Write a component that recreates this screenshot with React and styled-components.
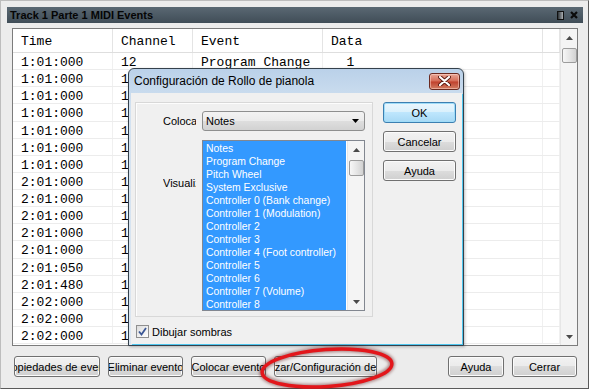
import React from 'react';
import styled, { createGlobalStyle } from 'styled-components';

const Global = createGlobalStyle`
  html, body { margin: 0; padding: 0; background: #ececec; }
  body { width: 589px; height: 389px; overflow: hidden; font-family: "Liberation Sans", Arial, sans-serif; }
  * { box-sizing: border-box; }
`;

const Window = styled.div`
  position: relative;
  width: 589px;
  height: 389px;
  padding: 6px 5px 0 6px;
  background: #ececec;
  border: 1px solid;
  border-color: #bdbdbd #5a5a5a #5a5a5a #bdbdbd;
  display: flex;
  flex-direction: column;
`;

const TitleBar = styled.div`
  height: 16px;
  display: flex;
  align-items: center;
  padding: 0 5px 0 3px;
  background: linear-gradient(#5a6873, #404d57);
  font: bold 11px "Liberation Sans", Arial, sans-serif;
  color: #050505;
`;

const TitleText = styled.span`
  flex: 1;
  white-space: nowrap;
`;

const TitleIcons = styled.div`
  display: flex;
  align-items: center;
  gap: 6px;
`;

const TableFrame = styled.div`
  margin: 5px 5px 0;
  height: 318px;
  border: 1px solid #7c7c7c;
  background: #fff;
  display: flex;
  overflow: hidden;
`;

const Grid = styled.div`
  flex: 1;
  overflow: hidden;
  font-family: "Liberation Mono", "Courier New", monospace;
  font-size: 13px;
  color: #000;
`;

const Row = styled.div`
  display: grid;
  grid-template-columns: 100px 80px 130px 220px 1fr;
  height: ${p => (p.$head ? '24px' : '17.125px')};
  border-bottom: 1px solid ${p => (p.$head ? '#dedede' : '#ececec')};
`;

const Cell = styled.div`
  padding: ${p => (p.$head ? 2 : 3)}px 0 0 8px;
  line-height: ${p => (p.$head ? 21 : 14)}px;
  border-right: 1px solid ${p => (p.$head ? '#e4e4e4' : '#f0f0f0')};
  white-space: pre;
  overflow: hidden;
`;

const VScroll = styled.div`
  width: 17px;
  background: #f4f4f4;
  border-left: 1px solid #e6e6e6;
  display: flex;
  flex-direction: column;
  align-items: center;
`;

const ArrowBox = styled.div`
  height: ${p => p.$h || 17}px;
  width: 100%;
  display: flex;
  align-items: center;
  justify-content: center;
`;

const Thumb = styled.div`
  width: 15px;
  height: ${p => p.$h}px;
  margin-top: ${p => p.$top}px;
  border: 1px solid #9c9c9c;
  border-radius: 2px;
  background: linear-gradient(90deg, #f7f7f7, #e4e4e4 55%, #d2d2d2);
`;

const Spacer = styled.div`
  flex: 1;
`;

const ButtonRow = styled.div`
  margin: 10px 6px 0 7px;
  display: flex;
  gap: 8px;
`;

const Button = styled.div`
  width: ${p => p.$w}px;
  height: ${p => p.$h || 21}px;
  margin-left: ${p => (p.$push ? 'auto' : '0')};
  display: flex;
  align-items: center;
  justify-content: center;
  overflow: hidden;
  white-space: nowrap;
  border: 1px solid ${p => (p.$default ? '#3c7fb1' : '#707070')};
  border-radius: 3px;
  background: ${p =>
    p.$default
      ? 'linear-gradient(#eaf6fd, #d9f0fc 50%, #bee6fd 50%, #a7d9f5)'
      : 'linear-gradient(#f2f2f2, #ebebeb 50%, #dddddd 50%, #cfcfcf)'};
  box-shadow: ${p => (p.$default ? 'inset 0 0 0 1px #9fdcf8' : 'inset 0 0 0 1px #fbfbfb')};
  font: 11px "Liberation Sans", Arial, sans-serif;
  color: #000;
  & > span { flex-shrink: 0; }
`;

const Dialog = styled.div`
  position: absolute;
  left: 127px;
  top: 67px;
  width: 336px;
  height: 278px;
  border: 1px solid #34414c;
  border-radius: 6px 6px 0 0;
  background: linear-gradient(#bad1e9, #d3e2f1 40px, #dbe6f1);
  display: flex;
  flex-direction: column;
  box-shadow: 1px 1px 3px rgba(0, 0, 0, 0.25);
`;

const DialogTitle = styled.div`
  height: 24px;
  display: flex;
  align-items: center;
  padding: 0 3px 0 5px;
  font: 12px "Liberation Sans", Arial, sans-serif;
  color: #000;
`;

const DialogTitleText = styled.span`
  flex: 1;
`;

const CloseBtn = styled.div`
  width: 31px;
  height: 17px;
  border: 1px solid #6b2a20;
  border-radius: 3px;
  background: linear-gradient(#e9a898, #d56a55 48%, #c0402c 52%, #d27d62);
  box-shadow: inset 0 0 0 1px rgba(255, 220, 210, 0.5);
  display: flex;
  align-items: center;
  justify-content: center;
`;

const Client = styled.div`
  flex: 1;
  margin: 0 1px 1px 2px;
  padding: 9px 5px 0 4px;
  background: #f0f0f0;
  box-shadow: 1px 1px 0 #4fc6ee;
  display: flex;
  flex-direction: column;
`;

const ClientTop = styled.div`
  display: flex;
  gap: 10px;
`;

const Panel = styled.div`
  width: 238px;
  height: 215px;
  border: 1px solid #d8d8d8;
  box-shadow: inset 1px 1px 0 #fdfdfd;
  display: grid;
  grid-template-columns: 33px 163px;
  grid-template-rows: 20px 171px;
  column-gap: 6px;
  row-gap: 9px;
  padding: 8px 0 0 27px;
  align-content: start;
`;

const Label = styled.div`
  font: 11px "Liberation Sans", Arial, sans-serif;
  color: #000;
  white-space: nowrap;
  overflow: hidden;
  line-height: ${p => p.$lh || 20}px;
  margin-top: ${p => p.$mt || 0}px;
`;

const Select = styled.div`
  height: 20px;
  border: 1px solid #8e8f8f;
  border-radius: 3px;
  background: linear-gradient(#f3f3f3, #ebebeb 50%, #dedede 50%, #d2d2d2);
  display: flex;
  align-items: center;
  padding: 0 5px 0 3px;
  font: 11px "Liberation Sans", Arial, sans-serif;
  color: #000;
`;

const ListBox = styled.div`
  height: 171px;
  border: 1px solid #828790;
  background: #fff;
  display: flex;
  overflow: hidden;
`;

const ListItems = styled.div`
  flex: 1;
  background: #3399ff;
  padding-top: 1px;
  margin-right: 1px;
`;

const ListItem = styled.div`
  height: 13px;
  padding-left: 3px;
  font: 10.4px/13px "Liberation Sans", Arial, sans-serif;
  color: #fff;
  white-space: nowrap;
`;

const ButtonCol = styled.div`
  display: flex;
  flex-direction: column;
  gap: 8px;
  width: 73px;
`;

const CheckRow = styled.div`
  margin: 8px 0 0 1px;
  display: flex;
  align-items: center;
  gap: 3px;
  font: 11px "Liberation Sans", Arial, sans-serif;
  color: #000;
`;

const CheckBox = styled.div`
  width: 13px;
  height: 13px;
  border: 1px solid #8f8f8f;
  background: linear-gradient(135deg, #dcdcdc, #ffffff);
  display: flex;
  align-items: center;
  justify-content: center;
`;

const Annotation = styled.svg`
  position: absolute;
  left: 244px;
  top: 337px;
  width: 160px;
  height: 51px;
  overflow: visible;
  pointer-events: none;
`;

const UpArrow = () => (
  <svg width="7" height="4" viewBox="0 0 7 4"><path d="M0 4 L3.5 0 L7 4Z" fill="#4a4a4a" /></svg>
);
const DownArrow = ({ color = '#4a4a4a' }) => (
  <svg width="7" height="4" viewBox="0 0 7 4"><path d="M0 0 L7 0 L3.5 4Z" fill={color} /></svg>
);

const times = [
  '1:01:000', '1:01:000', '1:01:000', '1:01:000', '1:01:000', '1:01:000', '1:01:000',
  '2:01:000', '2:01:000', '2:01:000', '2:01:000', '2:01:000', '2:01:050', '2:01:480',
  '2:02:000', '2:02:000', '2:02:000',
];

const listItems = [
  'Notes', 'Program Change', 'Pitch Wheel', 'System Exclusive', 'Controller 0 (Bank change)',
  'Controller 1 (Modulation)', 'Controller 2', 'Controller 3', 'Controller 4 (Foot controller)',
  'Controller 5', 'Controller 6', 'Controller 7 (Volume)', 'Controller 8',
];

export default function App() {
  return (
    <>
      <Global />
      <Window>
        <TitleBar>
          <TitleText>Track 1 Parte 1 MIDI Events</TitleText>
          <TitleIcons>
            <svg width="7" height="9" viewBox="0 0 7 9">
              <defs>
                <linearGradient id="rg" x1="0" x2="1">
                  <stop offset="0" stopColor="#1e2428" />
                  <stop offset="1" stopColor="#b9bec2" />
                </linearGradient>
              </defs>
              <rect x="0.5" y="0.5" width="6" height="8" fill="url(#rg)" stroke="#111" />
            </svg>
            <svg width="8" height="8" viewBox="0 0 8 8">
              <path d="M1 1 L7 7 M7 1 L1 7" stroke="#0b0b0b" strokeWidth="2.2" />
            </svg>
          </TitleIcons>
        </TitleBar>

        <TableFrame>
          <Grid>
            <Row $head>
              <Cell $head>Time</Cell>
              <Cell $head>Channel</Cell>
              <Cell $head>Event</Cell>
              <Cell $head>Data</Cell>
              <Cell $head />
            </Row>
            {times.map((t, i) => (
              <Row key={i}>
                <Cell>{t}</Cell>
                <Cell>12</Cell>
                <Cell>{i === 0 ? 'Program Change' : 'Note On'}</Cell>
                <Cell>{i === 0 ? '  1' : ''}</Cell>
                <Cell />
              </Row>
            ))}
          </Grid>
          <VScroll>
            <ArrowBox $h={17}><UpArrow /></ArrowBox>
            <Thumb $top={2} $h={15} />
            <Spacer />
            <ArrowBox $h={17}><DownArrow /></ArrowBox>
          </VScroll>
        </TableFrame>

        <ButtonRow>
          <Button $w={86}><span>Propiedades de evento</span></Button>
          <Button $w={75}><span>Eliminar evento</span></Button>
          <Button $w={75}><span>Colocar evento</span></Button>
          <Button $w={103}><span>zar/Configuración de</span></Button>
          <Button $w={56} $push><span>Ayuda</span></Button>
          <Button $w={65}><span>Cerrar</span></Button>
        </ButtonRow>

        <Dialog>
          <DialogTitle>
            <DialogTitleText>Configuración de Rollo de pianola</DialogTitleText>
            <CloseBtn>
              <svg width="13" height="10" viewBox="0 0 13 10">
                <path d="M2 1 L11 9 M11 1 L2 9" stroke="#5a1a12" strokeWidth="4" strokeLinecap="round" />
                <path d="M2 1 L11 9 M11 1 L2 9" stroke="#ffffff" strokeWidth="2.2" strokeLinecap="round" />
              </svg>
            </CloseBtn>
          </DialogTitle>
          <Client>
            <ClientTop>
              <Panel>
                <Label>Colocar en</Label>
                <Select>
                  <span style={{ flex: 1 }}>Notes</span>
                  <DownArrow color="#000" />
                </Select>
                <Label $lh={13} $mt={37}>Visualizar</Label>
                <ListBox>
                  <ListItems>
                    {listItems.map(it => (
                      <ListItem key={it}>{it}</ListItem>
                    ))}
                  </ListItems>
                  <VScroll>
                    <ArrowBox $h={17}><UpArrow /></ArrowBox>
                    <Thumb $top={2} $h={16} />
                    <Spacer />
                    <ArrowBox $h={17}><DownArrow /></ArrowBox>
                  </VScroll>
                </ListBox>
              </Panel>
              <ButtonCol>
                <Button $w={73} $default><span>OK</span></Button>
                <Button $w={73}><span>Cancelar</span></Button>
                <Button $w={73}><span>Ayuda</span></Button>
              </ButtonCol>
            </ClientTop>
            <CheckRow>
              <CheckBox>
                <svg width="9" height="9" viewBox="0 0 9 9">
                  <path d="M1 4.5 L3.5 7.5 L8 1" fill="none" stroke="#3b5795" strokeWidth="1.8" />
                </svg>
              </CheckBox>
              <span>Dibujar sombras</span>
            </CheckRow>
          </Client>
        </Dialog>

        <Annotation viewBox="0 0 160 51">
          <defs>
            <filter id="blur" x="-20%" y="-50%" width="140%" height="200%">
              <feGaussianBlur stdDeviation="1.5" />
            </filter>
          </defs>
          <ellipse cx="82" cy="30" rx="65" ry="18.5" transform="rotate(-4 82 30)" fill="none" stroke="rgba(90,0,0,0.45)" strokeWidth="6" filter="url(#blur)" />
          <ellipse cx="82" cy="30" rx="65" ry="18.5" transform="rotate(-4 82 30)" fill="none" stroke="#e3161b" strokeWidth="3.5" />
        </Annotation>
      </Window>
    </>
  );
}
